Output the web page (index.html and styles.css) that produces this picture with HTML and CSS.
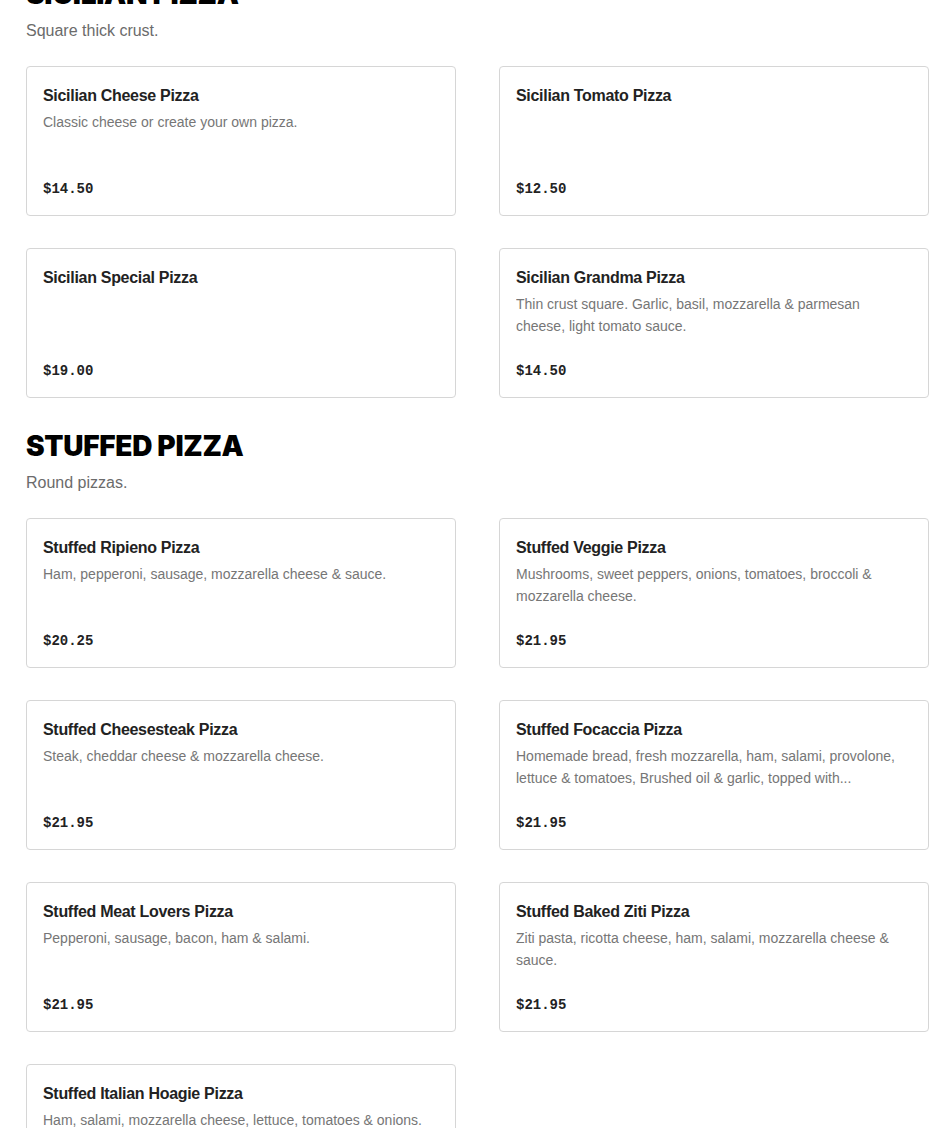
FILE: index.html
```html
<!DOCTYPE html>
<html>
<head>
<meta charset="utf-8">
<link rel="stylesheet" href="styles.css">
</head>
<body>
<main class="menu">
  <section class="section section-first">
    <h2 class="section-title">SICILIAN PIZZA</h2>
    <p class="section-sub">Square thick crust.</p>
    <div class="grid">
      <div class="card">
        <div class="item-name">Sicilian Cheese Pizza</div>
        <div class="item-desc">Classic cheese or create your own pizza.</div>
        <div class="item-price">$14.50</div>
      </div>
      <div class="card">
        <div class="item-name">Sicilian Tomato Pizza</div>
        <div class="item-desc"></div>
        <div class="item-price">$12.50</div>
      </div>
      <div class="card">
        <div class="item-name">Sicilian Special Pizza</div>
        <div class="item-desc"></div>
        <div class="item-price">$19.00</div>
      </div>
      <div class="card">
        <div class="item-name">Sicilian Grandma Pizza</div>
        <div class="item-desc">Thin crust square. Garlic, basil, mozzarella &amp; parmesan cheese, light tomato sauce.</div>
        <div class="item-price">$14.50</div>
      </div>
    </div>
  </section>
  <section class="section">
    <h2 class="section-title">STUFFED PIZZA</h2>
    <p class="section-sub">Round pizzas.</p>
    <div class="grid">
      <div class="card">
        <div class="item-name">Stuffed Ripieno Pizza</div>
        <div class="item-desc">Ham, pepperoni, sausage, mozzarella cheese &amp; sauce.</div>
        <div class="item-price">$20.25</div>
      </div>
      <div class="card">
        <div class="item-name">Stuffed Veggie Pizza</div>
        <div class="item-desc">Mushrooms, sweet peppers, onions, tomatoes, broccoli &amp; mozzarella cheese.</div>
        <div class="item-price">$21.95</div>
      </div>
      <div class="card">
        <div class="item-name">Stuffed Cheesesteak Pizza</div>
        <div class="item-desc">Steak, cheddar cheese &amp; mozzarella cheese.</div>
        <div class="item-price">$21.95</div>
      </div>
      <div class="card">
        <div class="item-name">Stuffed Focaccia Pizza</div>
        <div class="item-desc">Homemade bread, fresh mozzarella, ham, salami, provolone, lettuce &amp; tomatoes, Brushed oil &amp; garlic, topped with...</div>
        <div class="item-price">$21.95</div>
      </div>
      <div class="card">
        <div class="item-name">Stuffed Meat Lovers Pizza</div>
        <div class="item-desc">Pepperoni, sausage, bacon, ham &amp; salami.</div>
        <div class="item-price">$21.95</div>
      </div>
      <div class="card">
        <div class="item-name">Stuffed Baked Ziti Pizza</div>
        <div class="item-desc">Ziti pasta, ricotta cheese, ham, salami, mozzarella cheese &amp; sauce.</div>
        <div class="item-price">$21.95</div>
      </div>
      <div class="card">
        <div class="item-name">Stuffed Italian Hoagie Pizza</div>
        <div class="item-desc">Ham, salami, mozzarella cheese, lettuce, tomatoes &amp; onions.</div>
        <div class="item-price">$21.95</div>
      </div>
    </div>
  </section>
</main>
</body>
</html>
```

FILE: styles.css
```css
html, body {
  margin: 0;
  padding: 0;
  background: #ffffff;
}

body {
  font-family: "Liberation Sans", Arial, sans-serif;
  color: #222222;
  overflow: hidden;
}

.menu {
  padding: 0 21px 0 26px;
}

.section {
  margin-top: 30px;
}

.section-first {
  margin-top: -24px;
}

.section-title {
  margin: 0;
  font-family: "Inter", "Liberation Sans", sans-serif;
  font-weight: 900;
  font-size: 28px;
  line-height: 36px;
  color: #000000;
  letter-spacing: -0.3px;
}

.section-sub {
  margin: 7px 0 0;
  font-size: 16px;
  line-height: 24px;
  color: #6b6b6b;
}

.grid {
  margin-top: 23px;
  display: grid;
  grid-template-columns: 430px 430px;
  column-gap: 43px;
  row-gap: 32px;
}

.card {
  box-sizing: border-box;
  height: 150px;
  border: 1px solid #d6d6d6;
  border-radius: 4px;
  padding: 16px;
  display: flex;
  flex-direction: column;
}

.item-name {
  margin-top: 1px;
  font-size: 16px;
  line-height: 24px;
  font-weight: 700;
  letter-spacing: -0.3px;
  color: #222222;
}

.item-desc {
  margin-top: 3px;
  font-size: 14px;
  line-height: 22px;
  color: #767676;
  display: -webkit-box;
  -webkit-line-clamp: 2;
  -webkit-box-orient: vertical;
  overflow: hidden;
}

.item-price {
  margin-top: auto;
  font-family: "Liberation Mono", "Courier New", monospace;
  font-weight: 700;
  font-size: 14px;
  line-height: 20px;
  color: #222222;
}
```
